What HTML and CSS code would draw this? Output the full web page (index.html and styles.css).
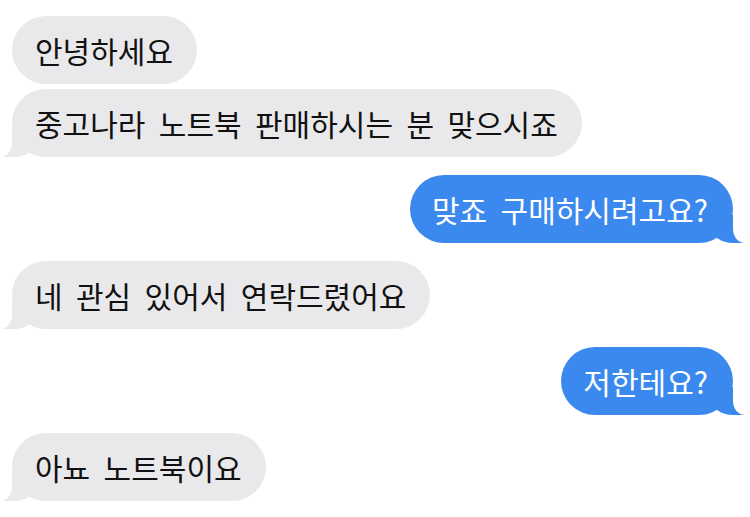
FILE: index.html
```html
<!DOCTYPE html>
<html lang="ko">
<head>
    <meta charset="UTF-8">
    <meta name="viewport" content="width=device-width, initial-scale=1.0">
    <title>메시지</title>
    <link rel="stylesheet" href="styles.css">
</head>
<body>
    <div id="chat">
        <p class="msg them">안녕하세요</p>
        <p class="msg them tail first-gap">중고나라 노트북 판매하시는 분 맞으시죠</p>
        <p class="msg me tail">맞죠 구매하시려고요?</p>
        <p class="msg them tail">네 관심 있어서 연락드렸어요</p>
        <p class="msg me tail">저한테요?</p>
        <p class="msg them tail">아뇨 노트북이요</p>
    </div>
</body>
</html>
```

FILE: styles.css
```css
body{margin: 0; background: #fff;}
#chat{display: flex; flex-direction: column; gap: 18px; padding: 16px 17px 0 12px; font-family: "Noto Sans CJK KR", "Noto Sans", sans-serif;}
.msg{position: relative; margin: 0; padding: 17px 24px 17px 23px; font-size: 30px; line-height: 34px; word-spacing: 5px; border-radius: 34px; white-space: nowrap;}
.msg.first-gap{margin-top: -13px;} /* 연속 메시지는 간격 좁게 */
.them{align-self: flex-start; background: #e9e9eb; color: #111;}
.me{align-self: flex-end; background: #3b89ee; color: #fff; padding: 17px 25px 17px 22px;}

/* 말풍선 꼬리 */
.tail::before, .tail::after{content: ""; position: absolute; bottom: 0; height: 28px;}
.them.tail::before{left: -10px; border-left: 34px solid #e9e9eb; border-bottom-right-radius: 22px 16px;}
.them.tail::after{left: -40px; width: 40px; background: #fff; border-bottom-right-radius: 12px 14px;}
.me.tail::before{right: -12px; border-right: 34px solid #3b89ee; border-bottom-left-radius: 22px 16px;}
.me.tail::after{right: -40px; width: 40px; background: #fff; border-bottom-left-radius: 12px 14px;}
```
